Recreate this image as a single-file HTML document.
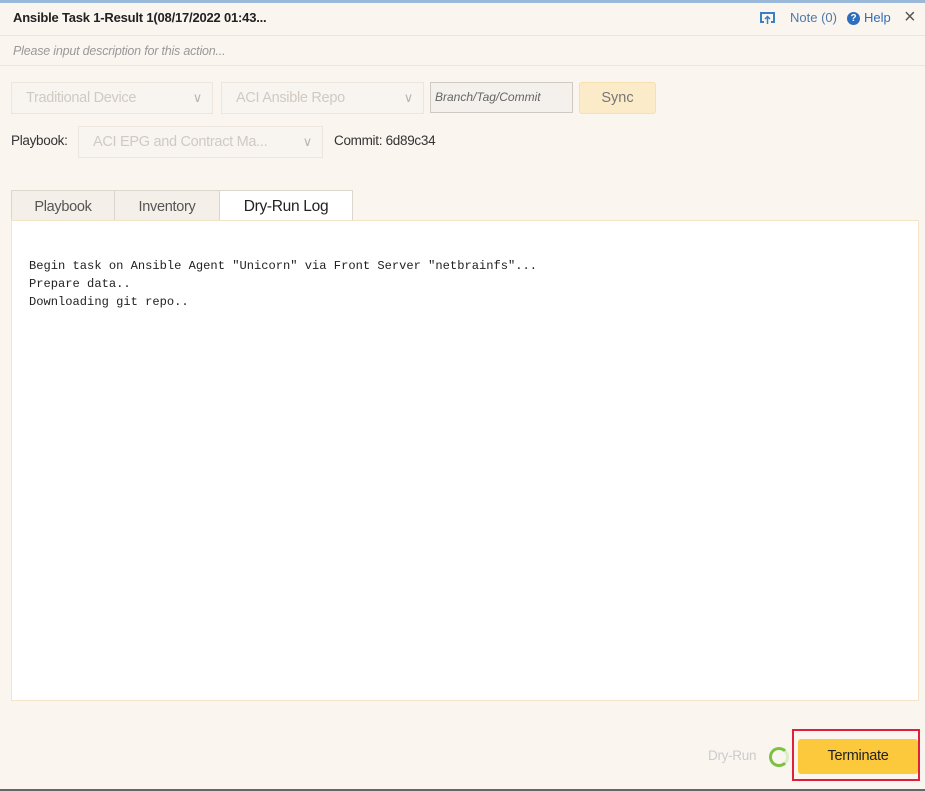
<!DOCTYPE html>
<html><head><style>
body{margin:0;width:925px;height:791px;background:#faf5ef;font-family:"Liberation Sans",sans-serif;position:relative;overflow:hidden;font-size:14px;color:#333}
.a{position:absolute}
.box{position:absolute;border:1px solid #ece6de;background:#f8f4ef;color:#cfcac3;font-size:14.5px;box-sizing:border-box;padding-left:14px;line-height:30px;letter-spacing:-0.3px}
.chev{position:absolute;right:10px;top:0;color:#b9b4ad;font-size:13px}
.tab{position:absolute;top:190px;height:31px;border:1px solid #ddd6cc;border-bottom:none;background:#f4efe9;box-sizing:border-box;text-align:center;line-height:32px;font-size:14.5px;color:#555;letter-spacing:-0.3px}
</style></head><body>
<div class="a" style="left:0;top:0;width:925px;height:3px;background:#9ab8d8"></div>
<div class="a" style="left:13px;top:10px;font-weight:bold;font-size:13px;color:#222;letter-spacing:-0.2px">Ansible Task 1-Result 1(08/17/2022 01:43...</div>
<svg class="a" style="left:759px;top:11px" width="17" height="14" viewBox="0 0 17 14"><path d="M5 11H2V2h13v9h-3" fill="none" stroke="#3b7fc4" stroke-width="2"/><path d="M8.5 13V6M6 8l2.5-2.5L11 8" fill="none" stroke="#3b7fc4" stroke-width="1.5"/></svg>
<div class="a" style="left:790px;top:10px;color:#4d7aa8;font-size:13px">Note (0)</div>
<div class="a" style="left:847px;top:12px;width:13px;height:13px;border-radius:50%;background:#2d6fbd;color:#fff;font-size:10px;text-align:center;line-height:13px;font-weight:bold">?</div>
<div class="a" style="left:864px;top:10px;color:#2d6fbd;font-size:13px">Help</div>
<div class="a" style="left:904px;top:6px;color:#555;font-size:20px">×</div>
<div class="a" style="left:0;top:35px;width:925px;height:1px;background:#f0e4d2"></div>
<div class="a" style="left:13px;top:44px;color:#999;font-style:italic;font-size:12.5px;letter-spacing:-0.2px">Please input description for this action...</div>
<div class="a" style="left:0;top:65px;width:925px;height:1px;background:#f0e4d2"></div>
<div class="box" style="left:11px;top:82px;width:202px;height:32px">Traditional Device<span class="chev">∨</span></div>
<div class="box" style="left:221px;top:82px;width:203px;height:32px">ACI Ansible Repo<span class="chev">∨</span></div>
<div class="a" style="left:430px;top:82px;width:143px;height:31px;border:1px solid #cfcac3;background:#f4f1ed;box-sizing:border-box;font-style:italic;font-size:12px;color:#666;padding-left:4px;line-height:29px">Branch/Tag/Commit</div>
<div class="a" style="left:579px;top:82px;width:77px;height:32px;background:#fcebc9;border:1px solid #f6e0b0;box-sizing:border-box;border-radius:3px;text-align:center;line-height:30px;font-size:14.5px;color:#777">Sync</div>
<div class="a" style="left:11px;top:133px;font-size:13.5px;color:#333;letter-spacing:-0.3px">Playbook:</div>
<div class="box" style="left:78px;top:126px;width:245px;height:32px">ACI EPG and Contract Ma...<span class="chev">∨</span></div>
<div class="a" style="left:334px;top:133px;font-size:13.5px;color:#333;letter-spacing:-0.3px">Commit: 6d89c34</div>
<div class="tab" style="left:11px;width:104px">Playbook</div>
<div class="tab" style="left:114px;width:106px">Inventory</div>
<div class="tab" style="left:219px;width:134px;background:#fff;color:#222;height:32px;font-size:15.5px">Dry-Run Log</div>
<div class="a" style="left:11px;top:220px;width:908px;height:481px;background:#fff;border:1px solid #f3e3c9;box-sizing:border-box"></div>
<pre class="a" style="left:29px;top:257px;margin:0;font-family:'Liberation Mono',monospace;font-size:12.1px;line-height:18px;color:#222">Begin task on Ansible Agent "Unicorn" via Front Server "netbrainfs"...
Prepare data..
Downloading git repo..</pre>
<div class="a" style="left:708px;top:748px;color:#ccc;font-size:13.5px;letter-spacing:-0.3px">Dry-Run</div>
<div class="a" style="left:769px;top:747px;width:14px;height:14px;border-radius:50%;border:3px solid #7cc242;border-right-color:#d8eec4"></div>
<div class="a" style="left:792px;top:729px;width:128px;height:52px;border:2px solid #e0203a;box-sizing:border-box"></div>
<div class="a" style="left:798px;top:739px;width:120px;height:35px;background:#fcc93d;border-radius:3px;text-align:center;line-height:35px;font-size:14.5px;color:#222;letter-spacing:-0.3px">Terminate</div>
<div class="a" style="left:0;top:789px;width:925px;height:2px;background:#666"></div>
</body></html>
